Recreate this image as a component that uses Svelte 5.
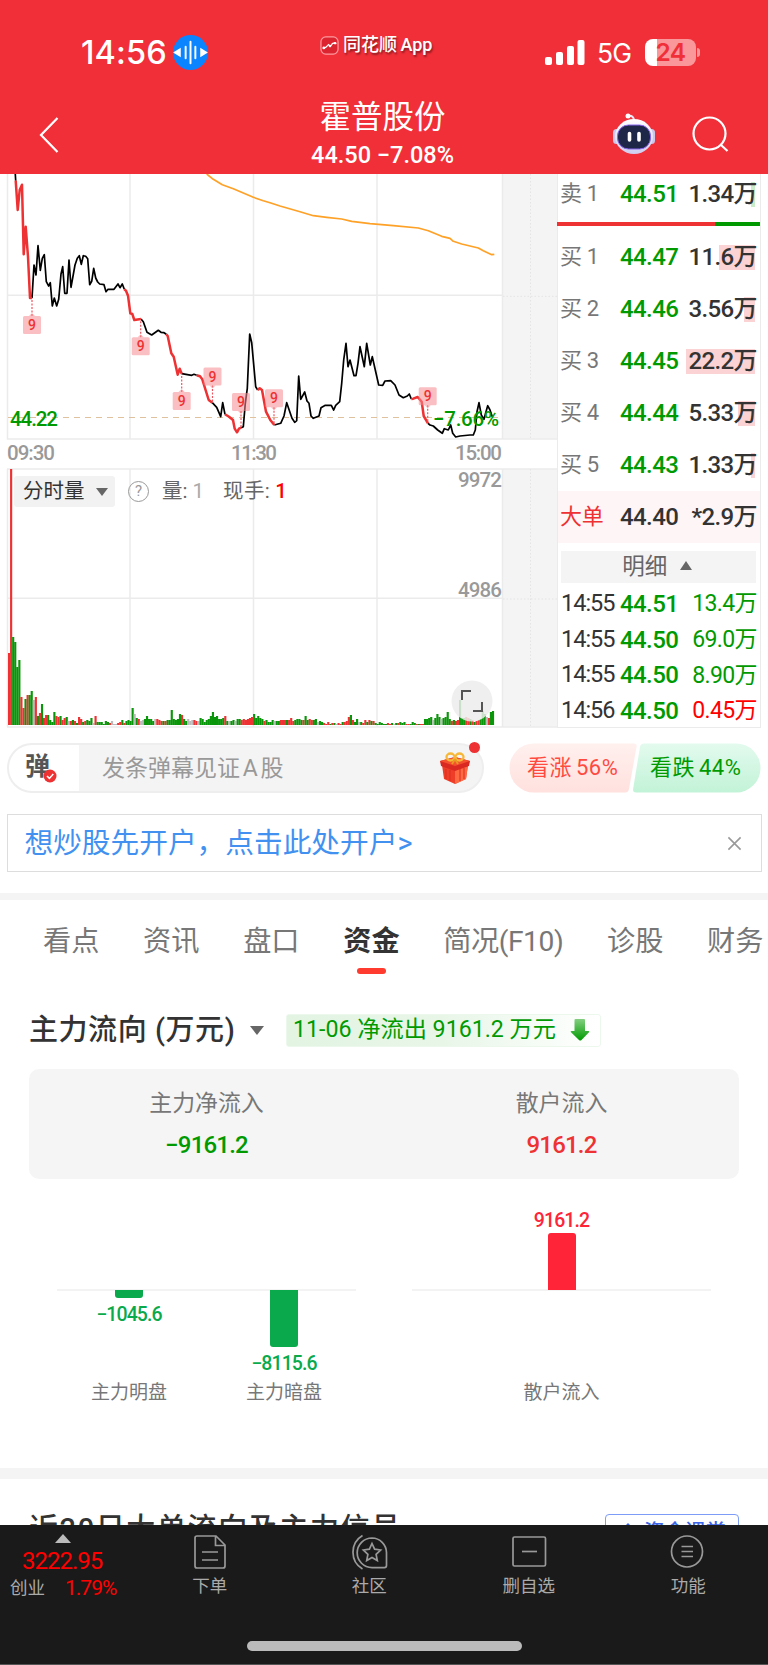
<script lang="ts">
	const bids = [
		{ label: '买', level: 1, price: '44.47', amount: '11.6万', heat: 36 },
		{ label: '买', level: 2, price: '44.46', amount: '3.56万', heat: 11 },
		{ label: '买', level: 3, price: '44.45', amount: '22.2万', heat: 69 },
		{ label: '买', level: 4, price: '44.44', amount: '5.33万', heat: 17 },
		{ label: '买', level: 5, price: '44.43', amount: '1.33万', heat: 4 }
	];

	const trades = [
		{ time: '14:55', price: '44.51', amount: '13.4万', up: false },
		{ time: '14:55', price: '44.50', amount: '69.0万', up: false },
		{ time: '14:55', price: '44.50', amount: '8.90万', up: false },
		{ time: '14:56', price: '44.50', amount: '0.45万', up: true }
	];

	const tabs = ['看点', '资讯', '盘口', '资金', '简况(F10)', '诊股', '财务'];
	const activeTab = '资金';

	const blackLines = [
		'15.3,0 15.7,6.7',
		'32,124 34,91 36,101 38,71.7 40.3,96.3 42.3,84.3 44.3,80.7 46.3,107.7 48.7,112 50.3,108.7 52.3,132 54.3,124 56.7,132 58.7,125.3 61,100 62.7,92.7 64.7,119.3 67,119.3 69,86 71,113.3 75,91 77.3,84.3 79.3,81.7 81.3,90.3 83.3,81.7 85.7,82.3 87.7,84.7 89.7,110.7 91.7,107.3 93.7,94.3 95.7,104 97.7,108 99.7,110 104,110.7 106,117.7 108,115.3 114,115.3 118,110 120,113.7 122.3,110 124.3,115.3',
		'141,145 143.3,147.7 147,158.3 151.7,161 158.3,156.3 161,158.3 164,158.7 166.3,160.3',
		'181.7,199.7 191.7,201.3 194,200.3 196.7,201.3',
		'212.3,228.7 216.7,233.3 220.7,242.7 222.7,228.7 225,240.3',
		'241.3,253.7 243.3,252.7 245.3,229.3 247.3,214.3 249.7,160 251.7,168.7 255.7,212.7 257.7,216',
		'274.3,251 280.7,249.3 284,242 286.7,228.7 292,244.3 294.7,248.3 296.7,246.7 298.7,202 300.7,225.3 304.7,218 307,227 309,229.3 311,242 313.3,244.3 319,242 321,233.7 325.3,231.3 331.3,231.3 333.7,236 335.7,231.3 339.7,227.7 341.7,209.3 343.7,186 346,169.3 348,192.7 350,186 354,201.7 356,201.7 358,189.3 360,172.7 364.3,192.7 366.7,169.3 370.3,191 372.3,182.7 378.7,211 382.7,211.3 385,207 390.7,206.7 395,211 399,221 403.3,223.7 407.3,222 409.3,220 411.3,225',
		'428,249.3 430,251 433.3,252 437.7,256 442.3,259.3 444.3,254.7 448.3,256 450.7,251 452.7,259.3 455.7,263 460,262 470,261 473.3,261 475.3,256 477,237.7 479,228.7 481.3,241 484,245.3 486,237.7 487.7,231.7 490,236 492.3,242.7'
	];

	const redLines = [
		'15.7,6.7 17.7,36 19.7,16 22,10.7 23.7,80.3 25.7,52.7 28,82.7 30,124 32,124',
		'124.3,115.3 126,116.7 128,121.7 130.3,139.3 132.3,140 134.3,146 141,145',
		'166.3,160.3 167.7,162 171.3,179.3 173.7,182.7 177.7,200.7 179.7,194.7 181.7,199.7',
		'196.7,201.3 200,202.3 202.3,205.3 208.7,226 212.3,228.7',
		'225,240.3 229,242.7 233,246 234.7,254.7 237,258.3 239,254.7 241.3,253.7',
		'257.7,216 259.7,214.3 262,216 266,237.7 270.3,246 274.3,251',
		'411.3,225 413.3,224.7 417.7,223 421.7,227.7 423.7,242 428,249.3'
	];

	const average =
		'206.7,0 213.3,5.3 222.3,10.7 233.3,14.7 253.3,23.3 263.3,26.7 270,28.7 280,32 300,37.7 313.3,41.7 326.7,43.3 341.7,45 351.7,47.3 370,49.7 393.3,51.7 418.3,54 428.3,56.7 441.7,62.3 450,64.3 453.3,67.3 461.7,70 478.3,74 483.3,76.7 491.7,80.7 494.3,80.3';

	// y is the top of the tag, tip the point on the price line it belongs to
	const tags = [
		{ x: 32, y: 142, tip: 124 },
		{ x: 140.7, y: 163.3, tip: 146 },
		{ x: 181.7, y: 218, tip: 200 },
		{ x: 212.5, y: 193.5, tip: 228 },
		{ x: 241, y: 219, tip: 253 },
		{ x: 274, y: 215.3, tip: 250 },
		{ x: 427.7, y: 213.3, tip: 249 }
	];

	// one entry per minute: height followed by r(ise), g(reen) or n(eutral)
	const volumes = (
		'72r 256r 88g 83g 58g 65g 28r 17r 26g 30r 30g 34g 25n 28r 9g 12r 21g 7r 10r 10g 5g 3g 13g 9r 8r ' +
		'9g 5r 7r 8g 4n 4r 5g 4r 2g 8r 6r 3g 4r 5g 4g 7g 2n 9r 3g 3g 3g 1g 4g 3g 2r ' +
		'4n 1n 1n 2r 3r 5g 2r 4g 5g 4g 17g 11n 7g 6r 4n 5n 6g 9g 6g 6g 4g 6n 6r 5r 4r ' +
		'4g 4r 5g 5g 15g 6g 5g 6g 11g 10r 6g 4g 6n 4n 5n 5r 4r 4n 7g 6g 3g 5g 6g 9g 13g ' +
		'8g 9g 6g 6g 7g 9r 4g 4n 4g 5g 4n 6g 6g 5r 6r 5r 6r 7r 8r 11g 7g 9g 7g 6g 4r ' +
		'5g 3g 3g 5g 4n 4g 4g 5r 5r 5r 5g 5r 7r 4r 5g 6g 6g 5g 5r 9g 5g 6r 5r 5g 6g ' +
		'3n 4g 3g 2r 1r 3r 1g 2r 2g 1n 2r 1r 3g 3r 4r 8r 10g 5r 3g 6g 3n 3g 2r ' +
		'5r 3g 5r 4g 4r 2g 1g 3g 2g 1g 1g 2r 1r 2g 1n 2g 2r 3g 2g 3g 1r 1r 1g 3g 2g ' +
		'1r 1g 1r 1r 6g 6g 7g 8g 5n 7g 11g 8g 6n 7g 8g 13g 6g 4r 5g 4r 5r 25g 7g 7g 8r ' +
		'7r 6g 5r 3g 4r 5r 6g 14g 11g 8n 7r 13g 14g'
	)
		.split(' ')
		.map((v) => ({ height: parseInt(v), kind: v.slice(-1) }));

	const step = 486 / volumes.length;
</script>

<div class="screen">
	<header>
		<div class="status">
			<span class="clock">14:56</span>
			<svg class="voice" viewBox="0 0 36 36">
				<circle cx="18" cy="18" r="18" fill="#0a84ff" />
				<path d="M13 12v12M18 7v22M23 12v12" />
				<path d="M7 15v6L2 18zM29 15v6l5-3z" fill="#fff" stroke="none" />
			</svg>
			<div class="brand">
				<svg viewBox="0 0 20 20">
					<rect x="1" y="1" width="18" height="18" rx="5" fill="#dc2430" stroke="#ff9ba0" stroke-width="1.300" />
					<path d="M3 13l3-1 3-3 2 2 2-3 3-1" fill="none" stroke="#fff" stroke-width="1.200" />
					<circle cx="4" cy="12.500" r="1.400" fill="#fff" />
					<circle cx="10.500" cy="10.500" r="1.300" fill="#fff" />
					<circle cx="16" cy="7.500" r="1.300" fill="#fff" />
				</svg>
				<span>同花顺 App</span>
			</div>
			<svg class="signal" viewBox="0 0 40 26" fill="#fff">
				<rect x="0" y="17" width="7" height="8" rx="2" />
				<rect x="11" y="12" width="7" height="13" rx="2" />
				<rect x="22" y="6" width="7" height="19" rx="2" />
				<rect x="32.500" y="0" width="7" height="25" rx="2" />
			</svg>
			<span class="net">5G</span>
			<div class="battery"><span>24</span></div>
			<i class="cap"></i>
		</div>
		<div class="nav">
			<svg class="back" viewBox="0 0 20 36"><path d="M18.500 1L2 18l16.500 17" /></svg>
			<div class="title">
				<h1>霍普股份</h1>
				<p>44.50 −7.08%</p>
			</div>
			<svg class="robot" viewBox="0 0 44 42">
				<defs>
					<linearGradient id="shell" x1="0" y1="0" x2="0" y2="1">
						<stop offset="0" stop-color="#fff" />
						<stop offset="1" stop-color="#cfcdf0" />
					</linearGradient>
				</defs>
				<path d="M16 3q6-1 6 5" fill="none" stroke="#e9e8fb" stroke-width="2" />
				<circle cx="16" cy="3" r="2.500" fill="#fff" />
				<rect x="1" y="16" width="7" height="15" rx="3.500" fill="#c9c8ec" />
				<rect x="36" y="16" width="7" height="15" rx="3.500" fill="#c9c8ec" />
				<ellipse cx="22" cy="23.500" rx="19" ry="17.500" fill="url(#shell)" />
				<rect x="5.500" y="12" width="33" height="24" rx="11" fill="#1e2748" stroke="#8a66ee" />
				<path d="M17.500 20.500v6.500M27 20.500v6.500" stroke="#fff" stroke-width="3.600" stroke-linecap="round" />
			</svg>
			<svg class="search" viewBox="0 0 38 38">
				<circle cx="17.500" cy="17.500" r="16" />
				<path d="M29 29l6.500 6" />
			</svg>
		</div>
	</header>

	<section class="quote">
		<div class="charts">
			<svg class="price" viewBox="0 0 557 294">
				<rect x="502.500" width="54.500" height="265" fill="#f4f4f4" />
				<path class="grid" d="M7.500 0V265H557M130 0V265M253.500 0V265M377 0V265M502.500 0V265M7.500 121.300H502" />
				<path class="dots" d="M530.500 0V265M503 122.300H557" />
				<polyline class="average" points={average} />
				<path d="M8 243.500H502" class="ref" />
				{#each blackLines as points}
					<polyline class="black" {points} />
				{/each}
				{#each redLines as points}
					<polyline class="red" {points} />
				{/each}
				{#each tags as tag}
					{@const below = tag.y > tag.tip}
					<line class="stem" x1={tag.x} x2={tag.x} y1={below ? tag.y : tag.y + 18} y2={tag.tip} />
					<path
						class="tag"
						d={below
							? `M${tag.x - 3} ${tag.y}l3-3 3 3z`
							: `M${tag.x - 3} ${tag.y + 18}l3 3 3-3z`}
					/>
					<rect class="tag" x={tag.x - 9} y={tag.y} width="18" height="18" rx="1.500" />
					<text class="nine" x={tag.x} y={tag.y + 14}>9</text>
				{/each}
				<text class="edge" x="10" y="252" textLength="48">44.22</text>
				<text class="edge" x="433" y="252" textLength="66">−7.66%</text>
				<text class="axis" x="7" y="286" textLength="48">09:30</text>
				<text class="axis" x="231" y="286" textLength="46">11:30</text>
				<text class="axis" x="455" y="286" textLength="47">15:00</text>
			</svg>
			<div class="volume">
				<svg viewBox="0 0 557 260">
					<rect x="502.500" y="1" width="54.500" height="258" fill="#f4f4f4" />
					<path class="grid" d="M7 1H557M7 259H557M7.500 1V259M130 1V259M253.500 1V259M377 1V259M502.500 1V259M7.500 130.300H502" />
					<path class="dots" d="M530.500 1V259M503 131H557" />
					<text class="axis" x="458" y="18.500" textLength="44">9972</text>
					<text class="axis" x="458" y="128.500" textLength="44">4986</text>
					{#each volumes as v, i}
						<rect class="bar {v.kind}" x={8 + i * step} y={257 - v.height} width="2.150" height={v.height} />
					{/each}
				</svg>
				<div class="tools">
					<button class="picker">分时量<i class="down"></i></button>
					<span class="help">?</span>
					<span>量: <em>1</em></span>
					<span class="hand">现手: <b>1</b></span>
				</div>
				<svg class="expand" viewBox="0 0 42 42">
					<circle cx="21" cy="21" r="20.500" fill="#ececec" opacity=".85" />
					<path d="M11 20v-9h9M31 22v9h-9" />
				</svg>
			</div>
		</div>

		<aside>
			<div class="level ask">
				<span class="side">卖 1</span><span class="val">44.51</span>
				<span class="amount"><i style="width: 4px"></i><u>1.34万</u></span>
			</div>
			<div class="ratio"><i></i></div>
			{#each bids as bid}
				<div class="level">
					<span class="side">{bid.label} {bid.level}</span><span class="val">{bid.price}</span>
					<span class="amount"><i style="width: {bid.heat}px"></i><u>{bid.amount}</u></span>
				</div>
			{/each}
			<div class="level big">
				<span class="side">大单</span><span class="val">44.40</span>
				<span class="amount"><u>*2.9万</u></span>
			</div>
			<div class="detail">明细 <i class="up"></i></div>
			{#each trades as trade}
				<div class="trade">
					<span class="time">{trade.time}</span><span class="val">{trade.price}</span>
					<span class="amount" class:rise={trade.up}>{trade.amount}</span>
				</div>
			{/each}
		</aside>
	</section>

	<section class="social">
		<div class="danmu">
			<div class="toggle">
				弹
				<svg viewBox="0 0 14 14">
					<circle cx="7" cy="7" r="6.500" fill="#ee3132" />
					<path d="M4 7l2.400 2.400L10.300 5" fill="none" stroke="#fff" stroke-width="1.500" />
				</svg>
			</div>
			<span class="hint">发条弹幕见证 A 股</span>
			<svg class="gift" viewBox="0 0 30 32">
				<path d="M2 13l13 5v14L4 27zM28 13l-13 5v14l11-5z" fill="#ee3e28" />
				<path d="M15 18l13-5-2 14-11 5z" fill="#ff6a43" />
				<path d="M0 9l15-4 15 4-1 5-14 5L1 14z" fill="#d92920" />
				<path d="M0 9l15-4 15 4-15 5z" fill="#f4512e" />
				<path d="M20 17v12M24 16v11M6 17v10M10 18v11" stroke="#d92c22" stroke-width="1" />
				<ellipse cx="10.500" cy="5" rx="4" ry="3.500" fill="none" stroke="#f7b737" stroke-width="2.300" />
				<ellipse cx="19.500" cy="5" rx="4" ry="3.500" fill="none" stroke="#f7b737" stroke-width="2.300" />
				<path d="M15 7l-3 5M15 7l3 5" stroke="#e99a22" stroke-width="2" />
			</svg>
			<i class="dot"></i>
		</div>
		<div class="vote">
			<svg viewBox="0 0 252 50">
				<defs>
					<linearGradient id="rise" x1="0" y1="0" x2="0" y2="1">
						<stop offset="0" stop-color="#fff0ee" />
						<stop offset="1" stop-color="#ffe1de" />
					</linearGradient>
					<linearGradient id="fall" x1="0" y1="0" x2="0" y2="1">
						<stop offset="0" stop-color="#e3faee" />
						<stop offset="1" stop-color="#c2f3d7" />
					</linearGradient>
				</defs>
				<path d="M25 .5H125q3 0 2.600 3L120 46q-.600 3.500-4 3.500H25A24.500 24.500 0 0 1 25 .5z" fill="url(#rise)" />
				<path d="M135 .5H227a24.500 24.500 0 0 1 0 49H127q-3.400 0-2.900-3.500L131 4q.600-3.500 4-3.500z" fill="url(#fall)" />
			</svg>
			<span class="bull">看涨 56%</span>
			<span class="bear">看跌 44%</span>
		</div>
	</section>

	<div class="ad">
		<span>想炒股先开户，点击此处开户&gt;</span>
		<svg viewBox="0 0 16 16"><path d="M1.500 1.500l13 13M14.500 1.500l-13 13" /></svg>
	</div>

	<nav class="tabs">
		{#each tabs as tab}
			<span class:active={tab === activeTab}>{tab}</span>
		{/each}
	</nav>

	<section class="flow">
		<div class="heading">
			<h2>主力流向 (万元)</h2>
			<i class="down"></i>
			<div class="badge">
				<span>11-06 净流出 9161.2 万元</span>
				<svg viewBox="0 0 20 22">
					<defs>
						<linearGradient id="arrow" x1="0" y1="0" x2="0" y2="1">
							<stop offset="0" stop-color="#83cf80" />
							<stop offset="1" stop-color="#009a00" />
						</linearGradient>
					</defs>
					<path d="M4.500 1q0-1 1-1h8.500q1 0 1 1v11h3.500q1.500 0 .500 1.300l-7.500 7.700q-1.300 1.200-2.500 0L1 13.300Q0 12 1.500 12h3z" fill="url(#arrow)" />
				</svg>
			</div>
		</div>
		<div class="summary">
			<div><span>主力净流入</span><b class="fall">−9161.2</b></div>
			<div><span>散户流入</span><b>9161.2</b></div>
		</div>
		<div class="bars">
			<div class="plot">
				<div class="column">
					<div class="top"></div>
					<div class="bottom"><i style="height: 8px"></i><b>−1045.6</b></div>
					<span>主力明盘</span>
				</div>
				<div class="column">
					<div class="top"></div>
					<div class="bottom"><i style="height: 57px"></i><b>−8115.6</b></div>
					<span>主力暗盘</span>
				</div>
			</div>
			<div class="plot">
				<div class="column">
					<div class="top"><b>9161.2</b><i style="height: 57px"></i></div>
					<div class="bottom"></div>
					<span>散户流入</span>
				</div>
			</div>
		</div>
	</section>

	<section class="signals">
		<h2>近20日大单流向及主力信号</h2>
		<span class="course"><svg viewBox="0 0 16 16"><path d="M8 1l6 6-6 7-6-7z" /></svg>资金课堂</span>
	</section>

	<footer>
		<div class="menu">
			<div class="index">
				<i class="up"></i>
				<b>3222.95</b>
				<p><span>创业</span><em>1.79%</em></p>
			</div>
			<div class="item order">
				<svg viewBox="0 0 38 36">
					<path d="M6 2h19l9 9v21q0 2-2 2H6q-2 0-2-2V4q0-2 2-2zM24.500 2v9.500H34M11 18h16M11 26h16" />
				</svg>
				下单
			</div>
			<div class="item club">
				<svg viewBox="0 0 38 36">
					<path d="M12.500 1.500A19.500 19.500 0 0 0 12.500 35M22 4a14.800 14.800 0 1 0 0 29.600h12.500q2 0 2-2V18.500A14.800 14.800 0 0 0 22 4z" />
					<path d="M22 9.500l2.600 5.700 6 .800-4.500 4.300 1.200 6.200L22 23.500l-5.300 3 1.200-6.200-4.500-4.300 6-.800z" />
				</svg>
				社区
			</div>
			<div class="item remove">
				<svg viewBox="0 0 38 36"><rect x="3" y="3" width="32.500" height="29" rx="1.500" /><path d="M12 17.500h15" /></svg>
				删自选
			</div>
			<div class="item more">
				<svg viewBox="0 0 38 36"><circle cx="18" cy="17.500" r="15.500" /><path d="M12.500 12.500H24M12.500 17.500H24M12.500 22.500H24" /></svg>
				功能
			</div>
		</div>
		<div class="home"></div>
	</footer>
</div>

<style>
	:global(body) {
		margin: 0;
		background: #fff;
	}

	.screen {
		width: 768px;
		height: 1665px;
		overflow: hidden;
		display: flex;
		flex-direction: column;
		font-family: Roboto, 'Noto Sans CJK SC', sans-serif;
		color: #333;
		line-height: 1;
	}

	.screen * {
		box-sizing: border-box;
	}

	h1,
	h2,
	p {
		margin: 0;
	}

	em,
	i {
		font-style: normal;
	}

	u {
		text-decoration: none;
		position: relative;
	}

	svg {
		display: block;
		flex: none;
	}

	.down,
	.up {
		display: inline-block;
		border: 6px solid transparent;
	}

	.down {
		border-top: 9px solid #666;
		border-bottom: 0;
	}

	.up {
		border-bottom: 9px solid #666;
		border-top: 0;
	}

	header {
		height: 174px;
		flex: none;
		background: #f12f38;
		color: #fff;
	}

	.status {
		height: 94px;
		padding: 11px 0 0 81px;
		display: flex;
		align-items: center;
	}

	.clock {
		width: 92px;
		font: 500 32.500px Inter;
		letter-spacing: 0.100px;
	}

	.voice {
		width: 35px;
		height: 35px;
	}

	.voice path {
		stroke: #fff;
		stroke-width: 2;
		stroke-linecap: round;
	}

	.brand {
		width: 225px;
		margin: -15px 0 0 112px;
		display: flex;
		align-items: center;
		gap: 4px;
		font-size: 18px;
		font-weight: 500;
		word-spacing: -1px;
		text-shadow: 1px 2px 2px #8a1a20;
	}

	.brand svg {
		width: 19px;
		height: 19px;
	}

	.signal {
		width: 40px;
		height: 26px;
	}

	.net {
		width: 48px;
		padding-left: 12px;
		font: 400 26.500px Inter;
		letter-spacing: -0.800px;
	}

	.battery {
		width: 51px;
		height: 27px;
		margin-left: 12px;
		border-radius: 8px;
		background: linear-gradient(90deg, #fff 12px, #f9979b 12px);
		color: #f12f38;
		text-align: center;
		font: 600 24.500px/27px Inter;
		letter-spacing: -0.500px;
	}

	.cap {
		width: 3px;
		height: 9px;
		margin-left: 1px;
		border-radius: 0 3px 3px 0;
		background: #f9979b;
	}

	.nav {
		display: flex;
		align-items: center;
		height: 80px;
		padding-left: 39px;
	}

	.back {
		width: 20px;
		height: 36px;
		margin-top: 2px;
	}

	.back path,
	.search {
		fill: none;
		stroke: #fff;
		stroke-width: 2.200;
	}

	.title {
		width: 553px;
		margin: -2px -94px 0 47px;
		text-align: center;
	}

	.title h1 {
		font-size: 31.500px;
		font-weight: 400;
		line-height: 43px;
	}

	.title p {
		font-size: 23.500px;
		font-weight: 500;
		line-height: 32px;
	}

	.robot {
		width: 44px;
		height: 42px;
		margin: -1px 0 0 47px;
	}

	.search {
		width: 38px;
		height: 38px;
		margin: 2px 0 0 36px;
	}

	.quote {
		display: flex;
		flex: none;
		height: 554px;
	}

	.charts {
		width: 557px;
	}

	.price {
		width: 557px;
		height: 294px;
	}

	.grid {
		fill: none;
		stroke: #ebebeb;
		stroke-width: 1.500;
	}

	.dots {
		stroke: #e4e4e4;
		stroke-width: 1;
		stroke-dasharray: 1.500 2;
	}

	polyline {
		fill: none;
		stroke-linejoin: round;
	}

	.average {
		stroke: #ffa126;
		stroke-width: 1.700;
	}

	.ref {
		stroke: #dfc29d;
		stroke-width: 1.200;
		stroke-dasharray: 6 5;
	}

	.black {
		stroke: #000;
		stroke-width: 1.700;
	}

	.red {
		stroke: #ee3132;
		stroke-width: 2.500;
	}

	.stem {
		stroke: #ee5560;
		stroke-width: 1.200;
		stroke-dasharray: 2 1.500;
	}

	.tag {
		fill: #f58b8f;
		fill-opacity: 0.550;
	}

	.nine {
		fill: #ee3132;
		font-size: 14px;
		font-weight: 500;
		text-anchor: middle;
	}

	.edge {
		fill: #009a00;
		font-size: 20.500px;
		font-weight: 500;
	}

	.axis {
		fill: #999;
		font-size: 20.500px;
		font-weight: 500;
	}

	.volume {
		position: relative;
		height: 260px;
	}

	.r {
		fill: #ee3132;
	}

	.g {
		fill: #0a960a;
	}

	.n {
		fill: #bbb;
	}

	.tools {
		position: absolute;
		left: 14px;
		top: 8px;
		height: 31px;
		display: flex;
		align-items: center;
		color: #666;
		font-size: 20.500px;
	}

	.tools em {
		color: #aaa;
	}

	.tools b {
		color: #f00;
		font-weight: 500;
	}

	.hand {
		margin-left: 19px;
		letter-spacing: 0.300px;
	}

	.picker {
		display: flex;
		align-items: center;
		gap: 11px;
		width: 101px;
		height: 31px;
		padding: 0 0 0 9px;
		border: 0;
		border-radius: 3px;
		background: #f2f2f2;
		color: #333;
		font: inherit;
	}

	.picker .down {
		border-top-width: 8px;
	}

	.help {
		width: 21px;
		height: 21px;
		margin: 0 13px;
		border: 1.500px solid #999;
		border-radius: 50%;
		color: #999;
		font-size: 15px;
		line-height: 18px;
		text-align: center;
	}

	.expand {
		position: absolute;
		left: 451px;
		top: 212px;
		width: 42px;
		height: 42px;
	}

	.expand path {
		fill: none;
		stroke: #555;
		stroke-width: 2;
	}

	aside {
		width: 204px;
		height: 554px;
		border: 1.500px solid #ebebeb;
		border-top: 0;
		display: flex;
		flex-direction: column;
	}

	.level {
		display: flex;
		align-items: center;
		height: 52px;
		flex: none;
		padding-left: 2px;
		font-size: 24px;
		font-weight: 500;
		letter-spacing: -0.600px;
	}

	.ask {
		height: 48px;
		padding-bottom: 8px;
	}

	.side {
		width: 60px;
		color: #777;
		font-size: 22px;
		font-weight: 400;
		letter-spacing: -0.300px;
	}

	.val {
		width: 62px;
		color: #009a00;
	}

	.amount {
		position: relative;
		flex: 1;
		text-align: right;
		padding-right: 3px;
	}

	.amount i {
		position: absolute;
		right: 5px;
		top: 0;
		height: 25px;
		background: #fbd3d4;
	}

	.ask .amount i {
		background: #c9ecc9;
	}

	.ratio {
		height: 4px;
		margin: 0 0 5px -1px;
		background: #009a00;
		flex: none;
	}

	.ratio i {
		display: block;
		width: 158px;
		height: 4px;
		background: #ee3132;
	}

	.big {
		background: #fef5f6;
	}

	.big .side {
		color: #ee3132;
	}

	.big .val {
		color: #333;
	}

	.detail {
		height: 32px;
		margin: 8px 4px 3px 3px;
		padding-right: 3px;
		flex: none;
		background: #f4f4f4;
		color: #666;
		font-size: 22.500px;
		line-height: 31px;
		text-align: center;
	}

	.detail .up {
		margin: 0 0 4px 7px;
	}

	.trade {
		display: flex;
		align-items: center;
		height: 35.700px;
		flex: none;
		padding-left: 3px;
		font-size: 24px;
		font-weight: 500;
		letter-spacing: -0.600px;
	}

	.trade .time {
		width: 59px;
		font-weight: 400;
		font-size: 23.500px;
		letter-spacing: -1px;
	}

	.trade .amount {
		color: #009a00;
		font-size: 23px;
		font-weight: 400;
	}

	.trade .amount.rise {
		color: #f00;
	}

	.social {
		height: 50px;
		margin: 15px 7px 0;
		flex: none;
		display: flex;
		justify-content: space-between;
	}

	.danmu {
		position: relative;
		width: 477px;
		height: 50px;
		border: 2px solid #eee;
		border-radius: 25px;
		background: linear-gradient(90deg, #fff 70px, #f4f4f4 70px);
		display: flex;
		align-items: center;
	}

	.toggle {
		position: relative;
		width: 93px;
		padding: 0 0 4px 16px;
		font-size: 25px;
		font-weight: 700;
		color: #555;
	}

	.toggle svg {
		position: absolute;
		left: 34px;
		top: 15px;
		width: 14px;
		height: 14px;
	}

	.hint {
		width: 338px;
		color: #999;
		font-size: 23px;
		word-spacing: -3px;
	}

	.gift {
		width: 30px;
		height: 32px;
	}

	.dot {
		position: absolute;
		right: 2px;
		top: -3px;
		width: 11px;
		height: 11px;
		border-radius: 50%;
		background: #ee3132;
	}

	.vote {
		position: relative;
		width: 252px;
		height: 50px;
		display: flex;
		align-items: center;
		padding-left: 18px;
		font-size: 22px;
	}

	.vote svg {
		position: absolute;
		left: 0;
		top: 0;
		width: 252px;
		height: 50px;
	}

	.vote span {
		position: relative;
		width: 123px;
		flex: none;
		letter-spacing: 0.500px;
		word-spacing: -2px;
	}

	.bull {
		color: #ff4a40;
	}

	.bear {
		color: #009a00;
	}

	.ad {
		flex: none;
		height: 58px;
		margin: 21px 6px 21px 6.500px;
		padding: 0 19px 0 17px;
		border: 1.500px solid #ddd;
		display: flex;
		align-items: center;
		justify-content: space-between;
		color: #4291f0;
		font-size: 28.700px;
	}

	.ad svg {
		width: 15px;
		height: 15px;
		stroke: #999;
		stroke-width: 1.700;
	}

	.tabs {
		flex: none;
		height: 88px;
		padding-left: 43px;
		border-top: 7px solid #f4f4f4;
		display: flex;
		gap: 43.700px;
		color: #777;
		font-size: 28.200px;
		line-height: 83px;
		white-space: nowrap;
	}

	.tabs span:nth-child(5) {
		letter-spacing: -0.450px;
	}

	.active {
		display: flex;
		flex-direction: column;
		align-items: center;
		color: #333;
		font-weight: 700;
	}

	.active::after {
		content: '';
		width: 29px;
		height: 6px;
		margin-top: -15px;
		border-radius: 3px;
		background: #ff3b30;
	}

	.flow {
		flex: none;
		height: 487px;
		padding: 32px 29px 0;
	}

	.heading {
		display: flex;
		align-items: center;
		height: 34px;
	}

	h2 {
		font-size: 29px;
		font-weight: 500;
	}

	.heading h2 {
		width: 221px;
		white-space: nowrap;
		letter-spacing: 0.550px;
	}

	.heading .down {
		border-width: 9px 7px 0;
	}

	.badge {
		display: flex;
		align-items: center;
		width: 315px;
		height: 33px;
		margin-left: 22px;
		padding-left: 6px;
		border: 1px solid #edf8ed;
		border-radius: 3px;
		background: linear-gradient(90deg, #e3f4e3, #e8f6e8 50%, #fff);
		color: #009a00;
		font-size: 23.200px;
		white-space: nowrap;
	}

	.badge span {
		width: 277px;
	}

	.badge svg {
		width: 20px;
		height: 22px;
	}

	.summary {
		display: grid;
		grid-template-columns: 1fr 1fr;
		height: 110px;
		margin-top: 22px;
		border-radius: 10px;
		background: #f5f5f5;
		text-align: center;
	}

	.summary div {
		padding-top: 24px;
	}

	.summary span {
		display: block;
		color: #777;
		font-size: 22.900px;
	}

	.summary b {
		display: block;
		margin-top: 17px;
		color: #ee3132;
		font-size: 24px;
		font-weight: 500;
		letter-spacing: -0.800px;
	}

	.summary .fall {
		color: #009a00;
	}

	.bars {
		display: flex;
		gap: 56px;
		padding: 31.500px 28px 0;
	}

	.plot {
		flex: 1 1 0;
		min-width: 0;
		display: flex;
		justify-content: center;
		background: linear-gradient(#f3f3f3, #f3f3f3) 0 78px / 100% 2px no-repeat;
	}

	.column {
		flex: none;
		width: 155px;
		text-align: center;
		color: #777;
		font-size: 19px;
	}

	.top,
	.bottom {
		display: flex;
		flex-direction: column;
		align-items: center;
	}

	.top {
		height: 79px;
		justify-content: flex-end;
		color: #ff2438;
	}

	.bottom {
		height: 93px;
		color: #0aaa4c;
	}

	.column b {
		margin-bottom: 2px;
		font-size: 19.500px;
		font-weight: 500;
		letter-spacing: -0.900px;
	}

	.bottom b {
		margin-top: 7px;
	}

	.column i {
		flex: none;
		width: 28px;
		background: currentColor;
		border-radius: 3px 3px 0 0;
	}

	.bottom i {
		border-radius: 0 0 3px 3px;
	}

	.signals {
		flex: none;
		height: 57px;
		padding: 33px 29px 0;
		border-top: 11px solid #f4f4f4;
		display: flex;
		justify-content: space-between;
		overflow: hidden;
		white-space: nowrap;
	}

	.signals h2 {
		line-height: 35px;
		letter-spacing: 1.600px;
	}

	.course {
		display: flex;
		gap: 8px;
		width: 134px;
		height: 36px;
		margin-top: 2px;
		padding: 7px 0 0 14px;
		border: 1.500px solid #7c9cf8;
		border-radius: 4px;
		color: #3c65e8;
		font-size: 20.500px;
		font-weight: 500;
	}

	.course svg {
		width: 16px;
		height: 16px;
		fill: #3c65e8;
	}

	footer {
		flex: 1;
		background: #1a1a1a;
		border-bottom: 1px solid #555;
		color: #aaa;
	}

	.menu {
		display: flex;
		height: 80px;
	}

	.index {
		width: 130.500px;
		padding: 9px 0 0 10px;
		display: flex;
		flex-direction: column;
	}

	.index .up {
		width: 0;
		border-width: 0 8px 9px;
		border-bottom-color: #bbb;
		margin-left: 45px;
	}

	.index b {
		margin: 6px 0 0 12px;
		color: #f00;
		font-size: 24px;
		font-weight: 400;
		line-height: 24px;
		letter-spacing: -1px;
	}

	.index p {
		display: flex;
		align-items: center;
		gap: 20px;
		margin-top: 5px;
		font-size: 17.500px;
	}

	.index em {
		color: #f00;
		font-size: 21px;
		letter-spacing: -1px;
	}

	.item {
		width: 160px;
		padding-top: 9px;
		display: flex;
		flex-direction: column;
		align-items: center;
		gap: 8px;
		font-size: 17.500px;
	}

	.item svg {
		width: 38px;
		height: 36px;
		fill: none;
		stroke: #999;
		stroke-width: 1.700;
	}

	.home {
		width: 275px;
		height: 10px;
		margin: 36px auto 0;
		border-radius: 5px;
		background: #bbb;
	}
</style>
